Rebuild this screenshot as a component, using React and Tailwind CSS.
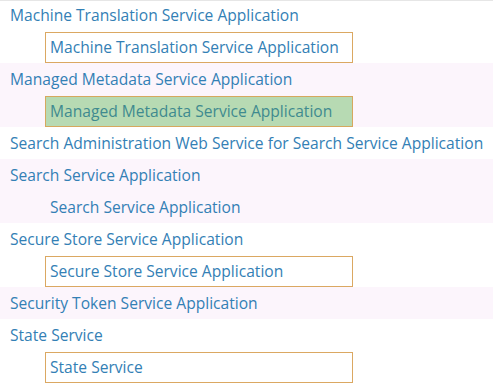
import React from "react";

const rows = [
  { label: "Machine Translation Service Application", box: "orange", alt: false },
  { label: "Managed Metadata Service Application", box: "green", alt: true },
  { label: "Search Administration Web Service for Search Service Application", alt: false },
  { label: "Search Service Application", box: "none", alt: true },
  { label: "Secure Store Service Application", box: "orange", alt: false },
  { label: "Security Token Service Application", alt: true },
  { label: "State Service", box: "orange", alt: false },
];

function Sub({ label, box }) {
  if (box === "none") {
    return (
      <div className="h-8 flex items-center pl-[50px] pt-[2px]">
        <span>{label}</span>
      </div>
    );
  }
  const cls =
    box === "green"
      ? "bg-[#b7dab3] border-[#d6a85e]"
      : "bg-white border-[#dba862]";
  return (
    <div className="h-8 flex items-center pl-[45px]">
      <div className={`w-[308px] h-[31px] border flex items-center pl-[4px] pt-[2px] ${cls}`}>
        <span className={box === "green" ? "text-[#3f8a8f]" : ""}>{label}</span>
      </div>
    </div>
  );
}

export default function App() {
  return (
    <div
      className="w-[493px] h-[390px] bg-white overflow-hidden text-[15.6px] text-[#3380b5] border-t border-[#e6e6e6]"
      style={{ fontFamily: '"Open Sans", "Noto Sans", sans-serif' }}
    >
      <div className="-mt-[2px]">
        {rows.map((r, i) => (
          <div key={i} className={r.alt ? "bg-[#fcf5fc]" : "bg-white"}>
            <div className="h-8 flex items-center pl-[10px] pt-[2px] whitespace-nowrap">
              <span>{r.label}</span>
            </div>
            {r.box && <Sub label={r.label} box={r.box} />}
          </div>
        ))}
      </div>
    </div>
  );
}
